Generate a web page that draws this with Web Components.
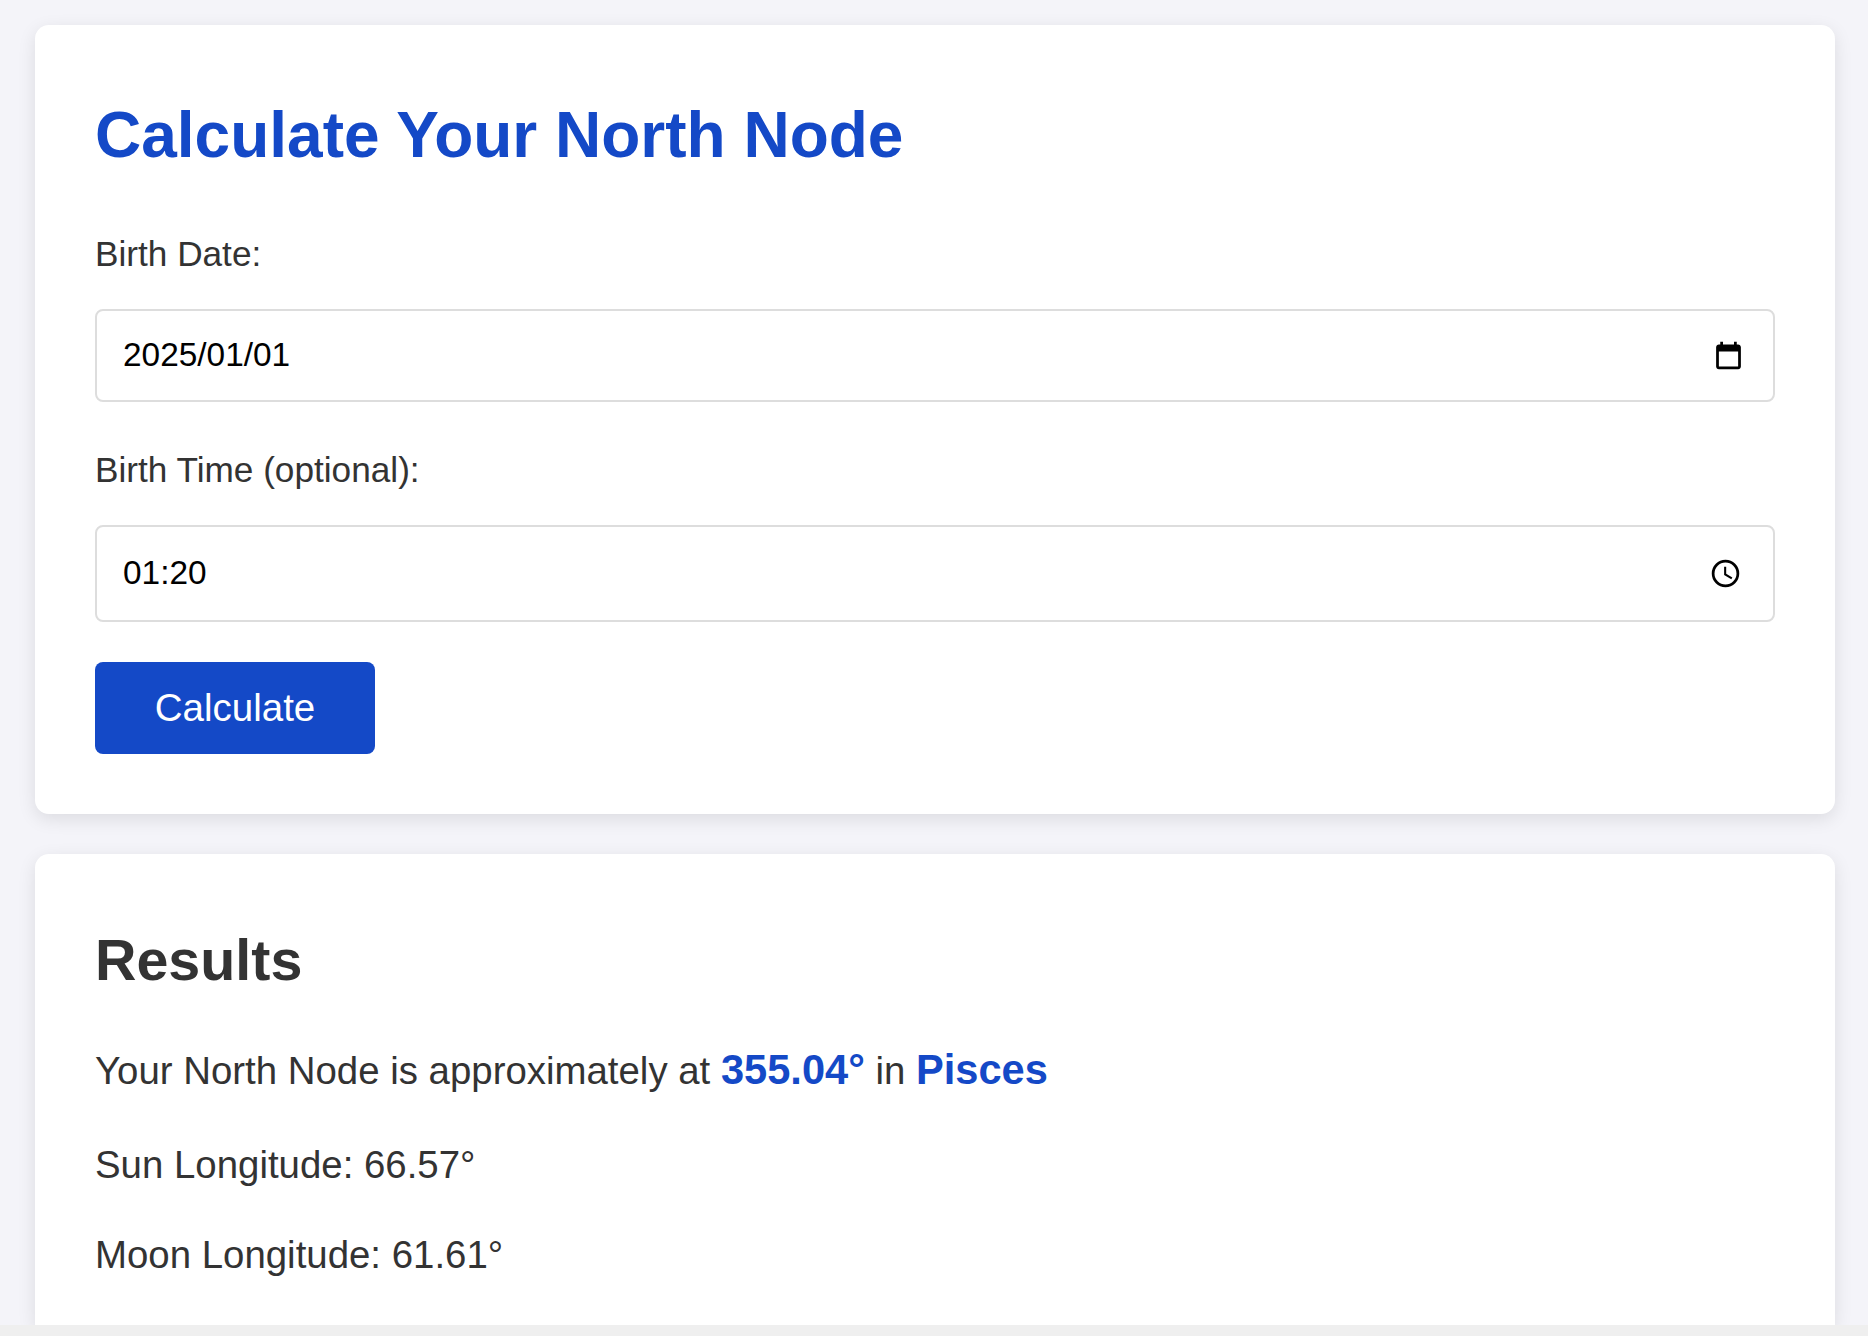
<!DOCTYPE html>
<html>
<head>
<meta charset="utf-8">
<title>North Node</title>
<style>
  html, body { margin: 0; height: 100%; }
  body {
    background: #f4f4f9;
    font-family: "Liberation Sans", Arial, sans-serif;
    color: #333;
    height: 1336px;
    overflow: hidden;
    box-sizing: border-box;
    padding-top: 25px;
    display: flex;
    flex-direction: column;
  }
  main {
    flex: 1;
    min-height: 0;
    display: flex;
    flex-direction: column;
    padding: 0 33px 0 35px;
  }
  /* strip along the bottom of the window, the second card stops at it */
  .bottom { height: 11px; background: #efefef; }
</style>
</head>
<body>
<main>
  <nn-card>
    <nn-heading level="1">Calculate Your North Node</nn-heading>
    <nn-field label="Birth Date:" value="2025/01/01" icon="date" height="93" gap="48"></nn-field>
    <nn-field label="Birth Time (optional):" value="01:20" icon="time" height="97" gap="40"></nn-field>
    <nn-button>Calculate</nn-button>
  </nn-card>
  <nn-card last>
    <nn-heading level="2">Results</nn-heading>
    <nn-line first>Your North Node is approximately at <b>355.04°</b> in <b>Pisces</b></nn-line>
    <nn-line>Sun Longitude: 66.57°</nn-line>
    <nn-line>Moon Longitude: 61.61°</nn-line>
  </nn-card>
</main>
<div class="bottom"></div>
<script>
class NNCard extends HTMLElement {
  constructor() {
    super();
    this.attachShadow({ mode: "open" });
    this.shadowRoot.innerHTML = `
      <style>
        :host {
          display: block;
          background: #fff;
          border-radius: 14px;
          box-shadow: 0 5px 18px rgba(0,0,0,0.1);
          padding: 60px;
          margin-bottom: 40px;
        }
        :host([last]) {
          flex: 1;
          min-height: 0;
          padding-bottom: 0;
          margin-bottom: 0;
          border-radius: 14px 14px 0 0;
        }
      </style>
      <slot></slot>
    `;
  }
}
customElements.define("nn-card", NNCard);

class NNHeading extends HTMLElement {
  constructor() {
    super();
    this.attachShadow({ mode: "open" });
  }
  connectedCallback() {
    const one = this.getAttribute("level") === "1";
    this.shadowRoot.innerHTML = `
      <style>
        :host {
          display: block;
          font-size: ${one ? 64 : 57.4}px;
          line-height: 1.15;
          font-weight: 700;
          color: ${one ? "#1449c7" : "#333"};
          margin: ${one ? "14px 0 61px" : "13px 0 55px"};
        }
      </style>
      <slot></slot>
    `;
  }
}
customElements.define("nn-heading", NNHeading);

const ICONS = {
  date: `<svg width="33" height="33" viewBox="0 0 24 24"><path fill="#000" d="M19 4h-1V2h-2v2H8V2H6v2H5c-1.1 0-2 .9-2 2v14c0 1.1.9 2 2 2h14c1.1 0 2-.9 2-2V6c0-1.1-.9-2-2-2zm0 16H5V9h14v11z"/></svg>`,
  time: `<svg width="33" height="33" viewBox="0 0 24 24"><path fill="#000" d="M12 2a10 10 0 1 0 0 20 10 10 0 0 0 0-20zm0 18a8 8 0 1 1 0-16 8 8 0 0 1 0 16zm.5-13H11v6l5.2 3.1.8-1.2-4.5-2.7V7z"/></svg>`
};

class NNField extends HTMLElement {
  constructor() {
    super();
    this.attachShadow({ mode: "open" });
  }
  connectedCallback() {
    const h = this.getAttribute("height");
    const icon = this.getAttribute("icon");
    this.shadowRoot.innerHTML = `
      <style>
        :host { display: block; margin-bottom: ${this.getAttribute("gap")}px; }
        label { display: block; font-size: 35.2px; line-height: 40px; margin-bottom: 35px; color: #333; }
        .box {
          display: flex;
          align-items: center;
          justify-content: space-between;
          box-sizing: border-box;
          height: ${h}px;
          border: 2px solid #ddd;
          border-radius: 8px;
          padding: 0 ${icon === "date" ? 28 : 31}px 0 26px;
          font-size: 33.4px;
          color: #000;
        }
        svg { display: block; }
      </style>
      <label>${this.getAttribute("label")}</label>
      <div class="box"><span>${this.getAttribute("value")}</span>${ICONS[icon]}</div>
    `;
  }
}
customElements.define("nn-field", NNField);

class NNButton extends HTMLElement {
  constructor() {
    super();
    this.attachShadow({ mode: "open" });
    this.shadowRoot.innerHTML = `
      <style>
        :host {
          display: inline-flex;
          align-items: center;
          justify-content: center;
          width: 280px;
          height: 92px;
          background: #1449c7;
          color: #fff;
          border-radius: 8px;
          font-size: 38.5px;
        }
      </style>
      <slot></slot>
    `;
  }
}
customElements.define("nn-button", NNButton);

class NNLine extends HTMLElement {
  constructor() {
    super();
    this.attachShadow({ mode: "open" });
    this.shadowRoot.innerHTML = `
      <style>
        :host { display: block; font-size: 38.4px; line-height: 44px; margin-bottom: 46px; color: #333; }
        :host([first]) { margin-bottom: 50px; }
        :host(:last-child) { margin-bottom: 0; }
        ::slotted(b) { color: #1449c7; font-size: 41.6px; }
      </style>
      <slot></slot>
    `;
  }
}
customElements.define("nn-line", NNLine);
</script>
</body>
</html>
